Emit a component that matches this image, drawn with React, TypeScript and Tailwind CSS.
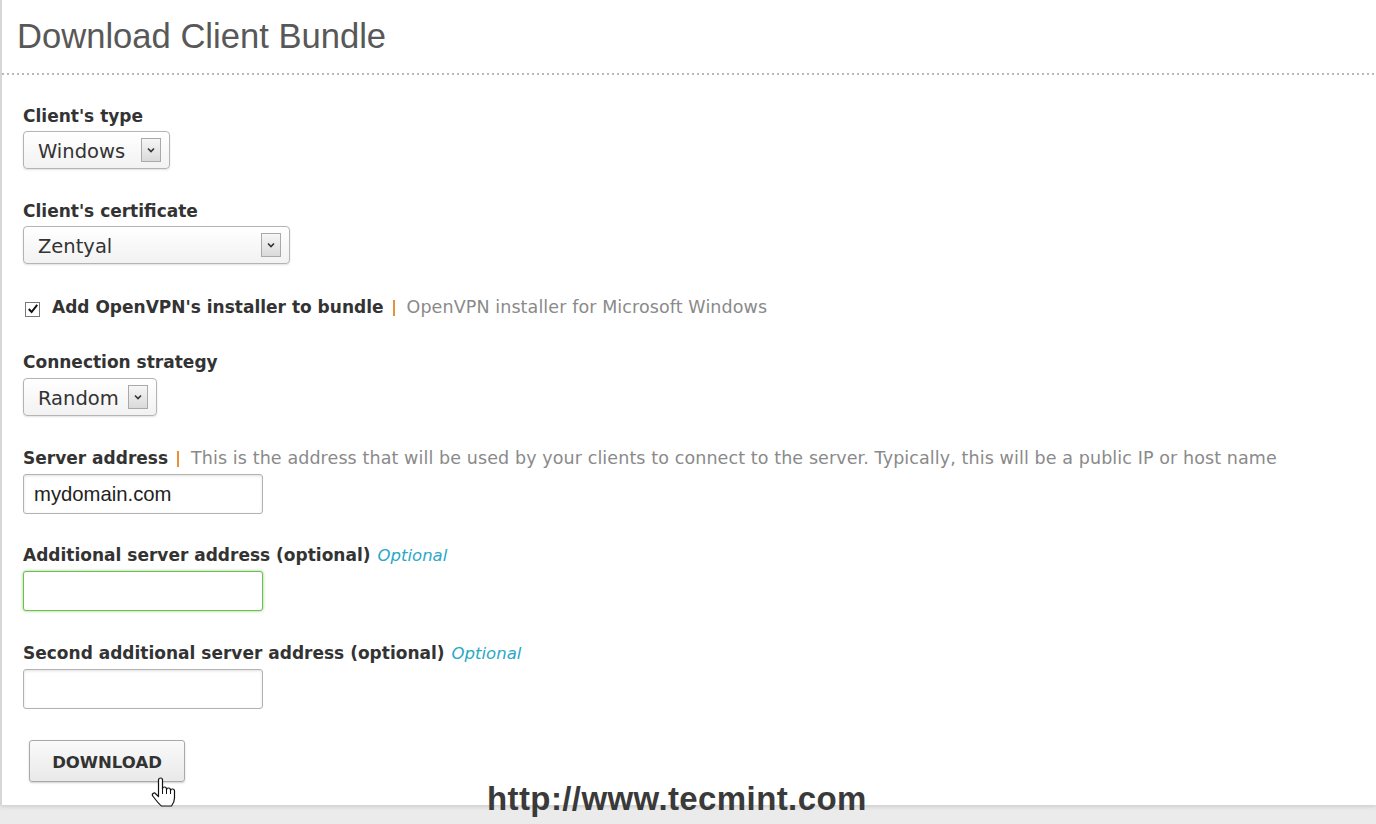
import React from "react";

function Chevron() {
  return (
    <span className="flex h-[24px] w-[20px] items-center justify-center border border-[#a9a9a9] bg-gradient-to-b from-[#f6f6f6] to-[#dadada]">
      <svg width="10" height="8" viewBox="0 0 10 8">
        <path d="M2 2.5 L5 5.5 L8 2.5" fill="none" stroke="#333" strokeWidth="1.6" />
      </svg>
    </span>
  );
}

function Select({ value, width }: { value: string; width: string }) {
  return (
    <div
      className={`${width} flex h-[38px] items-center justify-between rounded-[4px] border border-[#b4b4b4] bg-gradient-to-b from-white to-[#f2f2f2] pl-[14px] pr-[8px] shadow-[0_1px_2px_rgba(0,0,0,0.12)]`}
    >
      <span className="pt-[3px] text-[19.5px] text-[#333]">{value}</span>
      <Chevron />
    </div>
  );
}

function TextInput({ value, focused }: { value?: string; focused?: boolean }) {
  return (
    <div
      className={
        focused
          ? "flex h-[40px] w-[240px] items-center rounded-[3px] border border-[#6fbf4f] bg-white pl-[10px] shadow-[0_0_3px_rgba(90,180,60,0.7)]"
          : "flex h-[40px] w-[240px] items-center rounded-[3px] border border-[#b2b2b2] bg-white pl-[10px] shadow-[inset_0_1px_3px_rgba(0,0,0,0.12)]"
      }
    >
      <span className="font-['Liberation_Sans',sans-serif] text-[20.3px] text-[#222]">{value}</span>
    </div>
  );
}

function Label({ children }: { children: React.ReactNode }) {
  return (
    <div className="flex h-[22px] items-center gap-[9px] pb-[3px] text-[17px] font-bold leading-[19px] text-[#333]">
      {children}
    </div>
  );
}

function Bar() {
  return <span className="h-[16px] w-[2px] bg-[#e8913a]" />;
}

function Help({ children }: { children: React.ReactNode }) {
  return <span className="ml-[3px] text-[17.5px] font-normal tracking-[0.1px] text-[#8a8a8a]">{children}</span>;
}

function Optional() {
  return <span className="-ml-[2px] text-[16.5px] font-normal italic text-[#2aa8c6]">Optional</span>;
}

function HandCursor() {
  return (
    <svg width="26" height="30" viewBox="0 0 26 30" className="absolute left-[151px] top-[777px]">
      <path
        d="M7.5 3 a2 2 0 0 1 4 0 V12 a2 2 0 0 1 4 0 V13 a2 2 0 0 1 4 0 V14 a2 2 0 0 1 4 0 V21 c0 3.5 -1.5 6 -3 8 H10.5 c-2 -1.5 -4 -4 -6 -6.5 L1.8 19 a1.8 1.8 0 0 1 2.8 -2.3 L7.5 19.5 Z"
        fill="#fff"
        stroke="#111"
        strokeWidth="1.2"
        strokeLinejoin="round"
      />
      <path d="M11.5 12 v5 M15.5 13 v4 M19.5 14 v3" stroke="#111" strokeWidth="1" />
    </svg>
  );
}

export default function App() {
  return (
    <div className="relative h-[824px] w-[1376px] overflow-hidden bg-[#ebebeb] font-['DejaVu_Sans',sans-serif]">
      <div className="h-[805px] border-l-2 border-[#d6d6d6] bg-white shadow-[0_2px_4px_rgba(0,0,0,0.12)]">
        <div className="h-[73px] pl-[15px] pt-[16px]">
          <h1 className="font-['Liberation_Sans',sans-serif] text-[34.6px] leading-[40px] text-[#585858]">
            Download Client Bundle
          </h1>
        </div>
        <div className="h-[2px] bg-[linear-gradient(to_right,#b8b8b8_2px,transparent_2px)] bg-[length:5px_2px]" />

        <div className="pl-[21px] pt-[32px]">
          <Label>Client's type</Label>
          <div className="mt-[2px]">
            <Select value="Windows" width="w-[147px]" />
          </div>

          <div className="mt-[33px]">
            <Label>Client's certificate</Label>
          </div>
          <div className="mt-[2px]">
            <Select value="Zentyal" width="w-[267px]" />
          </div>

          <div className="mt-[34px] flex h-[22px] items-center">
            <span className="ml-[2px] flex h-[15px] w-[15px] items-center justify-center border border-[#777] bg-white">
              <svg width="12" height="12" viewBox="0 0 12 12">
                <path d="M1.8 6 L4.6 9 L10.2 1.8" fill="none" stroke="#111" strokeWidth="2" />
              </svg>
            </span>
            <span className="ml-[12px]">
              <Label>
                Add OpenVPN's installer to bundle
                <Bar />
                <Help>OpenVPN installer for Microsoft Windows</Help>
              </Label>
            </span>
          </div>

          <div className="mt-[33px]">
            <Label>Connection strategy</Label>
          </div>
          <div className="mt-[3px]">
            <Select value="Random" width="w-[134px]" />
          </div>

          <div className="mt-[33px]">
            <Label>
              Server address
              <Bar />
              <Help>
                This is the address that will be used by your clients to connect to the server. Typically, this will
                be a public IP or host name
              </Help>
            </Label>
          </div>
          <div className="mt-[3px]">
            <TextInput value="mydomain.com" />
          </div>

          <div className="mt-[32px]">
            <Label>
              Additional server address (optional)
              <Optional />
            </Label>
          </div>
          <div className="mt-[3px]">
            <TextInput focused />
          </div>

          <div className="mt-[33px]">
            <Label>
              Second additional server address (optional)
              <Optional />
            </Label>
          </div>
          <div className="mt-[3px]">
            <TextInput />
          </div>

          <button className="ml-[6px] mt-[31px] h-[42px] w-[156px] rounded-[3px] border border-[#a9a9a9] bg-gradient-to-b from-[#fafafa] to-[#e9e9e9] pt-[4px] text-[16.5px] font-bold text-[#333] shadow-[0_1px_2px_rgba(0,0,0,0.2)]">
            DOWNLOAD
          </button>
        </div>
      </div>

      <HandCursor />

      <div className="absolute left-[487px] top-[781px] font-['Liberation_Sans',sans-serif] text-[33px] font-bold leading-[36px] tracking-[0.4px] text-[#3a3a3a]">
        http://www.tecmint.com
      </div>
    </div>
  );
}
